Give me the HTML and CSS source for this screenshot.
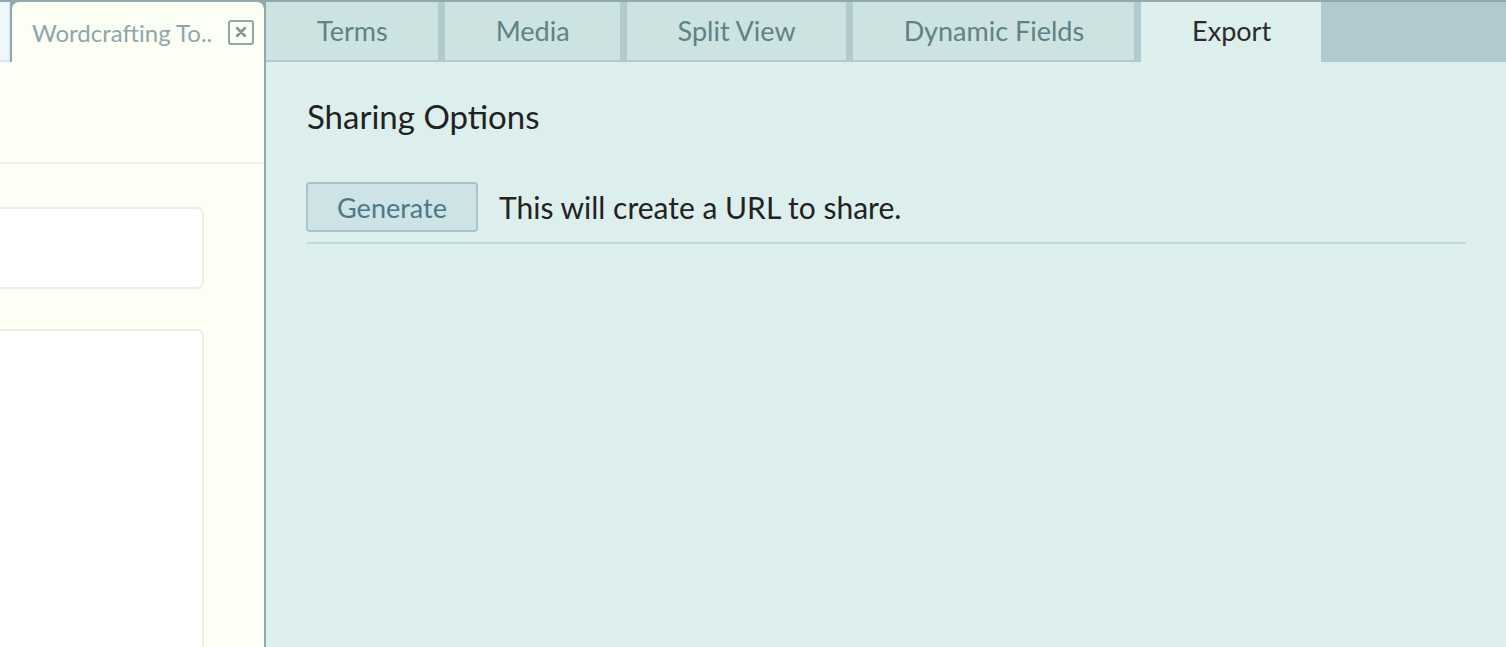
FILE: index.html
```html
<!DOCTYPE html>
<html lang="en">
<head>
  <meta charset="UTF-8" />
  <title>Wordcrafting Tool</title>
  <meta name="viewport" content="width=device-width, initial-scale=1" />
  <link rel="stylesheet" href="styles.css">
</head>
<body>
  <div class="app">
    <div class="left">
      <div class="left-tabs">
        <div class="mini-tab"></div>
        <div class="doc-tab">
          <span class="doc-title">Wordcrafting To..</span>
          <span class="close-box">
            <svg width="10" height="10" viewBox="0 0 10 10"><path d="M1 1L9 9M9 1L1 9" stroke="#7f979d" stroke-width="2.6" stroke-linecap="round"/></svg>
          </span>
        </div>
      </div>
      <div class="left-head"></div>
      <div class="left-body">
        <div class="card short"></div>
        <div class="card tall"></div>
      </div>
    </div>

    <div class="right">
      <div class="tabs">
        <div class="tab">Terms</div>
        <div class="tab">Media</div>
        <div class="tab">Split View</div>
        <div class="tab">Dynamic Fields</div>
        <div class="tab active">Export</div>
      </div>
      <div class="panel">
        <h2>Sharing Options</h2>
        <div class="share-row">
          <button class="btn">Generate</button>
          <span class="hint">This will create a URL to share.</span>
        </div>
      </div>
    </div>
  </div>
</body>
</html>
```

FILE: styles.css
```css
html, body {
  margin: 0;
  padding: 0;
  height: 100%;
}
body {
  font-family: Lato, "Open Sans", sans-serif;
  color: #222;
  overflow: hidden;
}
.app {
  display: flex;
  height: 100vh;
  box-sizing: border-box;
  border-top: 2px solid #8fa9ad;
  background: #8fa9ad;
}

/* linke Seite */
.left {
  width: 264px;
  flex: none;
  display: flex;
  flex-direction: column;
  background: #fbfff4;
}
.left-tabs {
  display: flex;
  height: 60px;
  gap: 2px;
  background: #8fa9ad;
}
.mini-tab {
  flex: none;
  width: 10px;
  background: #eef7fa;
  border-right: 1px solid #d3e8ef;
  border-bottom: 2px solid #d3e8ef;
  box-sizing: border-box;
}
.doc-tab {
  flex: 1;
  min-width: 0;
  background: #fbfff4;
  border-radius: 7px 7px 0 0;
  display: flex;
  align-items: center;
  padding: 0 10px 0 20px;
  gap: 8px;
}
.doc-title {
  flex: 1;
  font-size: 24px;
  color: #8fa6ac;
  white-space: nowrap;
}
.close-box {
  flex: none;
  width: 22px;
  height: 21px;
  border: 2px solid #8fa6ac;
  border-radius: 3px;
  display: flex;
  align-items: center;
  justify-content: center;
}
.left-head {
  height: 100px;
  border-bottom: 2px solid #efefe8;
}
.left-body {
  flex: 1;
  padding: 43px 60px 0 0;
  display: flex;
  flex-direction: column;
  gap: 40px;
  overflow: hidden;
}
.card {
  background: #fff;
  border: 2px solid #efefea;
  border-left: none;
  border-radius: 0 7px 7px 0;
}
.card.short { height: 78px; }
.card.tall { flex: 1; border-bottom: none; border-radius: 0 7px 0 0; }

/* rechte Seite */
.right {
  flex: 1;
  display: flex;
  flex-direction: column;
  border-left: 2px solid #8fa9ad;
  background: #ddefed;
}
.tabs {
  display: flex;
  gap: 7px;
  height: 60px;
  background: #b0cacd;
}
.tab {
  height: 58px;
  padding: 0 50px 0 51px;
  background: #cde3e1;
  color: #5f8285;
  font-size: 27px;
  line-height: 58px;
  white-space: nowrap;
}
.tab.active {
  height: 60px;
  background: #ddefed;
  color: #2b2b2b;
}
.panel {
  padding: 0 40px 0 41px;
}
.panel h2 {
  font-size: 33px;
  font-weight: normal;
  margin: 33px 0 0;
  line-height: 42px;
  color: #222;
}
.share-row {
  display: flex;
  align-items: center;
  gap: 21px;
  margin-top: 45px;
  padding-bottom: 10px;
  border-bottom: 2px solid #bcdade;
}
.btn {
  margin-left: -1px;
  width: 172px;
  height: 50px;
  background: #cde3e6;
  border: 2px solid #a6c5cb;
  border-radius: 4px;
  color: #4a7a88;
  font-family: inherit;
  font-size: 27px;
  cursor: pointer;
}
.hint {
  font-size: 30px;
  color: #222;
}
```
